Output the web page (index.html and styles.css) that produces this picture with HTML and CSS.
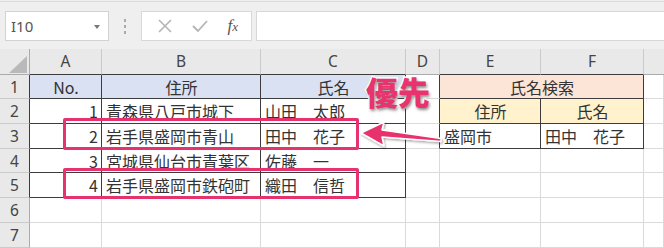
FILE: index.html
```html
<!DOCTYPE html>
<html lang="ja">
<head>
<meta charset="utf-8">
<link rel="stylesheet" href="styles.css">
</head>
<body>
<div class="app">
  <div class="fbar">
    <div class="namebox"><span class="nb-text">I10</span><span class="nb-caret"></span></div>
    <div class="dots"><span></span><span></span><span></span></div>
    <div class="fbtns">
      <svg class="ico" width="16" height="16" viewBox="0 0 16 16"><path d="M2 2 L14 14 M14 2 L2 14" stroke="#b4b4b4" stroke-width="1.6" fill="none"/></svg>
      <svg class="ico" width="18" height="16" viewBox="0 0 18 16"><path d="M2 8 L7 13 L16 3" stroke="#b4b4b4" stroke-width="1.8" fill="none"/></svg>
      <span class="fx"><i>f</i><i class="sx">x</i></span>
    </div>
    <div class="finput"></div>
  </div>
  <div class="sheet">
    <div class="ch corner"><svg width="30" height="26" viewBox="0 0 30 26"><polygon points="9,24 27,24 27,7" fill="#b9b9b9"/></svg></div>
    <div class="ch db">A</div>
    <div class="ch db">B</div>
    <div class="ch db">C</div>
    <div class="ch">D</div>
    <div class="ch db">E</div>
    <div class="ch db">F</div>
    <div class="ch last"></div>

    <div class="rh dr">1</div>
    <div class="c t blue ctr">No.</div>
    <div class="c t blue ctr">住所</div>
    <div class="c t blue ctr">氏名</div>
    <div class="c dr"></div>
    <div class="c t peach ctr span2">氏名検索</div>
    <div class="c"></div>

    <div class="rh dr">2</div>
    <div class="c t rt">1</div>
    <div class="c t">青森県八戸市城下</div>
    <div class="c t">山田　太郎</div>
    <div class="c dr"></div>
    <div class="c t yellow ctr">住所</div>
    <div class="c t yellow ctr">氏名</div>
    <div class="c"></div>

    <div class="rh dr">3</div>
    <div class="c t rt">2</div>
    <div class="c t">岩手県盛岡市青山</div>
    <div class="c t">田中　花子</div>
    <div class="c dr"></div>
    <div class="c t">盛岡市</div>
    <div class="c t">田中　花子</div>
    <div class="c"></div>

    <div class="rh dr">4</div>
    <div class="c t rt">3</div>
    <div class="c t">宮城県仙台市青葉区</div>
    <div class="c t">佐藤　一</div>
    <div class="c"></div>
    <div class="c"></div>
    <div class="c"></div>
    <div class="c"></div>

    <div class="rh dr">5</div>
    <div class="c t rt">4</div>
    <div class="c t">岩手県盛岡市鉄砲町</div>
    <div class="c t">織田　信哲</div>
    <div class="c"></div>
    <div class="c"></div>
    <div class="c"></div>
    <div class="c"></div>

    <div class="rh">6</div>
    <div class="c"></div>
    <div class="c"></div>
    <div class="c"></div>
    <div class="c"></div>
    <div class="c"></div>
    <div class="c"></div>
    <div class="c"></div>

    <div class="rh">7</div>
    <div class="c"></div>
    <div class="c"></div>
    <div class="c"></div>
    <div class="c"></div>
    <div class="c"></div>
    <div class="c"></div>
    <div class="c"></div>
  </div>

  <div class="mark mark1"></div>
  <div class="mark mark2"></div>
  <svg class="arrow" width="664" height="248" viewBox="0 0 664 248">
    <defs>
      <filter id="sh" x="-20%" y="-20%" width="140%" height="160%">
        <feDropShadow dx="1" dy="1.5" stdDeviation="1" flood-color="#000" flood-opacity="0.35"/>
      </filter>
    </defs>
    <polygon points="361,133 384,122 382,130 441,138.5 441,141.5 382,137 384,146" fill="#e8336e" stroke="#fff" stroke-width="1.5" stroke-linejoin="round" filter="url(#sh)"/>
  </svg>
  <div class="label">優先</div>
</div>
</body>
</html>
```
FILE: styles.css
```css
* { box-sizing: border-box; }
html, body { margin: 0; padding: 0; }
body { background: #efefef; }
.app {
  position: relative;
  width: 664px;
  height: 248px;
  overflow: hidden;
  background: #efefef;
  font-family: "Noto Sans CJK JP", sans-serif;
}
.fbar {
  height: 48px;
  border-top: 1px solid #dcdcdc;
  margin-top: 1px;
  padding: 9px 0 0 5px;
  display: flex;
  align-items: flex-start;
}
.namebox {
  width: 104px;
  height: 30px;
  background: #fff;
  border: 1px solid #d2d2d2;
  display: flex;
  align-items: center;
  justify-content: space-between;
  padding: 0 8px 0 5px;
}
.nb-text {
  font-family: "Noto Sans", sans-serif;
  font-size: 15px;
  color: #555;
}
.nb-caret {
  width: 0; height: 0;
  border-left: 3px solid transparent;
  border-right: 3px solid transparent;
  border-top: 4px solid #777;
  margin-top: 1px;
}
.dots {
  width: 32px;
  height: 30px;
  display: flex;
  flex-direction: column;
  align-items: center;
  justify-content: center;
  gap: 3px;
}
.dots span {
  width: 2px; height: 3px;
  background: #aaa;
}
.fbtns {
  width: 111px;
  height: 30px;
  background: #fff;
  border: 1px solid #d8d8d8;
  display: flex;
  align-items: center;
  justify-content: space-around;
  padding: 0 4px 0 6px;
}
.fx {
  font-family: "Liberation Serif", serif;
  font-size: 17px;
  color: #555;
  font-style: italic;
}
.fx i { font-style: italic; }
.fx .sx { font-size: 13px; }
.finput {
  flex: 1;
  height: 30px;
  margin-left: 4px;
  background: #fff;
  border: 1px solid #d8d8d8;
  border-right: none;
}
.sheet {
  display: grid;
  grid-template-columns: 30px 72px 159px 145px 34px 101px 103px 1fr;
  grid-template-rows: 26px 24px 25px 25px 24px 25px 25px 25px;
  background: #fff;
}
.ch {
  background: #e9e9e9;
  border-right: 1px solid #cacaca;
  border-bottom: 1px solid #ababab;
  font-family: "Noto Sans", sans-serif;
  font-size: 15.5px;
  line-height: 15px;
  color: #444;
  display: flex;
  align-items: center;
  justify-content: center;
}
.ch.corner { display: block; border-right-color: #ababab; }
.ch.corner svg { display: block; }
.ch.last { border-right: none; }
.rh {
  background: #e9e9e9;
  border-right: 1px solid #ababab;
  border-bottom: 1px solid #cacaca;
  font-family: "Noto Sans", sans-serif;
  font-size: 15.5px;
  color: #444;
  display: flex;
  align-items: center;
  justify-content: center;
}
.c {
  border-right: 1px solid #dadada;
  border-bottom: 1px solid #dadada;
  font-size: 16px;
  color: #333;
  display: flex;
  align-items: center;
  padding: 0 3px 0 4px;
  white-space: nowrap;
  overflow: hidden;
}
.t { border-right-color: #3c3c3c; border-bottom-color: #3c3c3c; }
.dr { border-right-color: #3c3c3c; }
.db { border-bottom-color: #3c3c3c; }
.ctr { justify-content: center; }
.rt { justify-content: flex-end; }
.span2 { grid-column: span 2; }
.blue { background: #d9e1f2; }
.peach { background: #fce4d6; }
.yellow { background: #fff2cc; }
.mark {
  position: absolute;
  left: 63px;
  width: 296px;
  border: 3px solid #e6326d;
  border-radius: 2px;
}
.mark1 { top: 118px; height: 32px; }
.mark2 { top: 168px; height: 31px; }
.arrow { position: absolute; left: 0; top: 0; pointer-events: none; }
.label {
  position: absolute;
  left: 366px;
  top: 77px;
  font-family: "Noto Sans CJK JP", sans-serif;
  font-weight: 900;
  font-size: 32px;
  line-height: 28px;
  color: #e8336e;
  -webkit-text-stroke: 3px #fff;
  paint-order: stroke fill;
  text-shadow: 1px 2px 3px rgba(0,0,0,0.45);
}
```
